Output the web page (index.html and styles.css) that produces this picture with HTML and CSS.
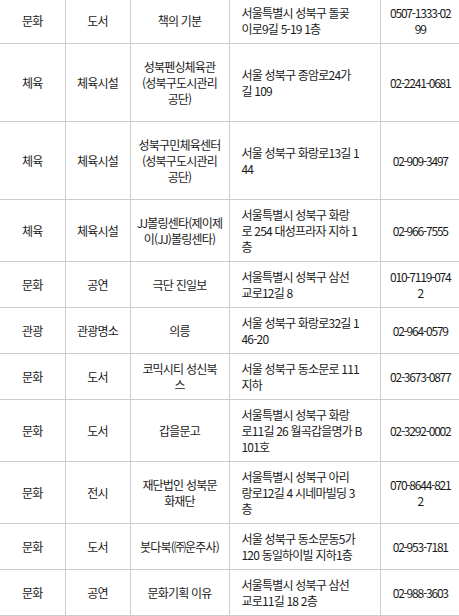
FILE: index.html
```html
<!DOCTYPE html>
<html lang="ko">
<head>
<meta charset="utf-8">
<title>성북구 시설 목록</title>
<link rel="stylesheet" href="styles.css">
</head>
<body>
<table class="list">
  <colgroup>
    <col class="c-type">
    <col class="c-sub">
    <col class="c-name">
    <col class="c-addr">
    <col class="c-tel">
  </colgroup>
  <tbody>
    <tr><td>문화</td><td>도서</td><td>책의 기분</td><td class="addr">서울특별시 성북구 돌곶<br>이로9길 5-19 1층</td><td class="tel">0507-1333-02<br>99</td></tr>
    <tr class="tall"><td>체육</td><td>체육시설</td><td>성북펜싱체육관<br>(성북구도시관리<br>공단)</td><td class="addr">서울 성북구 종암로24가<br>길 109</td><td class="tel">02-2241-0681</td></tr>
    <tr class="tall"><td>체육</td><td>체육시설</td><td>성북구민체육센터<br>(성북구도시관리<br>공단)</td><td class="addr">서울 성북구 화랑로13길 1<br>44</td><td class="tel">02-909-3497</td></tr>
    <tr><td>체육</td><td>체육시설</td><td>JJ볼링센타(제이제<br>이(JJ)볼링센타)</td><td class="addr">서울특별시 성북구 화랑<br>로 254 대성프라자 지하 1<br>층</td><td class="tel">02-966-7555</td></tr>
    <tr><td>문화</td><td>공연</td><td>극단 진일보</td><td class="addr">서울특별시 성북구 삼선<br>교로12길 8</td><td class="tel">010-7119-074<br>2</td></tr>
    <tr><td>관광</td><td>관광명소</td><td>의릉</td><td class="addr">서울 성북구 화랑로32길 1<br>46-20</td><td class="tel">02-964-0579</td></tr>
    <tr><td>문화</td><td>도서</td><td>코믹시티 성신북<br>스</td><td class="addr">서울 성북구 동소문로 111<br>지하</td><td class="tel">02-3673-0877</td></tr>
    <tr><td>문화</td><td>도서</td><td>갑을문고</td><td class="addr">서울특별시 성북구 화랑<br>로11길 26 월곡갑을명가 B<br>101호</td><td class="tel">02-3292-0002</td></tr>
    <tr><td>문화</td><td>전시</td><td>재단법인 성북문<br>화재단</td><td class="addr">서울특별시 성북구 아리<br>랑로12길 4 시네마빌딩 3<br>층</td><td class="tel">070-8644-821<br>2</td></tr>
    <tr><td>문화</td><td>도서</td><td>붓다북(㈜운주사)</td><td class="addr">서울 성북구 동소문동5가<br>120 동일하이빌 지하1층</td><td class="tel">02-953-7181</td></tr>
    <tr><td>문화</td><td>공연</td><td>문화기획 이유</td><td class="addr">서울특별시 성북구 삼선<br>교로11길 18 2층</td><td class="tel">02-988-3603</td></tr>
  </tbody>
</table>
</body>
</html>
```

FILE: styles.css
```css
html, body {
  margin: 0;
  padding: 0;
  background: #ffffff;
}

.list {
  border-collapse: collapse;
  table-layout: fixed;
  width: 460px;
  margin-top: -2px;
  font-family: "Noto Sans CJK KR", "Noto Sans", sans-serif;
  font-size: 12px;
  letter-spacing: -0.8px;
  line-height: 16px;
  color: #1a1a1a;
}

.c-type { width: 65px; }
.c-sub { width: 65px; }
.c-name { width: 99px; }
.c-addr { width: 151px; }
.c-tel { width: 80px; }

.list td {
  padding: 7px 2px 6px;
  border-right: 1px solid #cccccc;
  border-bottom: 1px solid #cccccc;
  text-align: center;
  vertical-align: middle;
  white-space: nowrap;
}

.list td.addr {
  text-align: left;
  padding-left: 12px;
  padding-right: 2px;
}

.list td.tel {
  letter-spacing: -1.2px;
  border-right: none;
}

.list tr.tall td {
  height: 64px;
}
```
